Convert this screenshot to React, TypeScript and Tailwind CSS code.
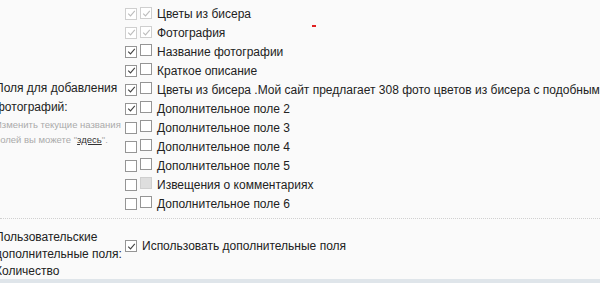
import React from "react";

type Box = "on" | "off" | "dis-on" | "dis-off";

function Check({ kind }: { kind: Box }) {
  const border =
    kind === "dis-on" || kind === "dis-off" ? "border-[#cfcfcf]" : "border-[#959595]";
  const bg = kind === "dis-off" ? "bg-[#dedede]" : "bg-white";
  const stroke = kind === "dis-on" ? "#bdbdbd" : "#444";
  return (
    <span className={`inline-flex h-[12px] w-[12px] items-center justify-center border ${border} ${bg}`}>
      {(kind === "on" || kind === "dis-on") && (
        <svg width="9" height="9" viewBox="0 0 9 9">
          <path d="M1.2 4.6 L3.5 6.9 L7.8 1.8" fill="none" stroke={stroke} strokeWidth="1.1" />
        </svg>
      )}
    </span>
  );
}

const rows: [Box, Box, string][] = [
  ["dis-on", "dis-on", "Цветы из бисера"],
  ["dis-on", "dis-on", "Фотография"],
  ["on", "off", "Название фотографии"],
  ["on", "off", "Краткое описание"],
  ["on", "off", "Цветы из бисера .Мой сайт предлагает 308 фото цветов из бисера с подобными"],
  ["on", "off", "Дополнительное поле 2"],
  ["off", "off", "Дополнительное поле 3"],
  ["off", "off", "Дополнительное поле 4"],
  ["off", "off", "Дополнительное поле 5"],
  ["off", "dis-off", "Извещения о комментариях"],
  ["off", "off", "Дополнительное поле 6"],
];

export default function App() {
  return (
    <div
      className="relative h-[283px] w-[600px] overflow-hidden bg-[#fafafa] text-[12px] text-[#222]"
      style={{ fontFamily: "Tahoma, 'Liberation Sans', Arial, sans-serif" }}
    >
      <div className="absolute left-[312px] top-[25px] h-[2px] w-[4px] bg-[#e02020]" />
      <div className="-ml-[5px] flex pt-[4px]">
        <div className="w-[130px] shrink-0 pt-[75px] leading-[19px]">
          <div>Поля для добавления фотографий:</div>
          <div className="text-[9.5px] leading-[15px] text-[#aaa]">
            Изменить текущие названия полей вы можете "<span className="text-[#333] underline">здесь</span>".
          </div>
        </div>
        <div className="flex flex-col whitespace-nowrap pb-[5px]">
          {rows.map(([a, b, t], i) => (
            <div key={i} className="flex h-[19px] items-center">
              <Check kind={a} />
              <span className="ml-[3px]">
                <Check kind={b} />
              </span>
              <span className="ml-[5px]">{t}</span>
            </div>
          ))}
        </div>
      </div>
      <div className="border-t border-dotted border-[#d0d0d0]" />
      <div className="-ml-[5px] flex pt-[10px]">
        <div className="w-[130px] shrink-0 leading-[17px]">
          <div>Пользовательские дополнительные поля:</div>
          <div>Количество</div>
        </div>
        <div className="flex h-[34px] items-center whitespace-nowrap">
          <Check kind="on" />
          <span className="ml-[5px]">Использовать дополнительные поля</span>
        </div>
      </div>
      <div className="absolute bottom-0 left-0 h-[4px] w-full bg-[#dfe5ea]" />
    </div>
  );
}
